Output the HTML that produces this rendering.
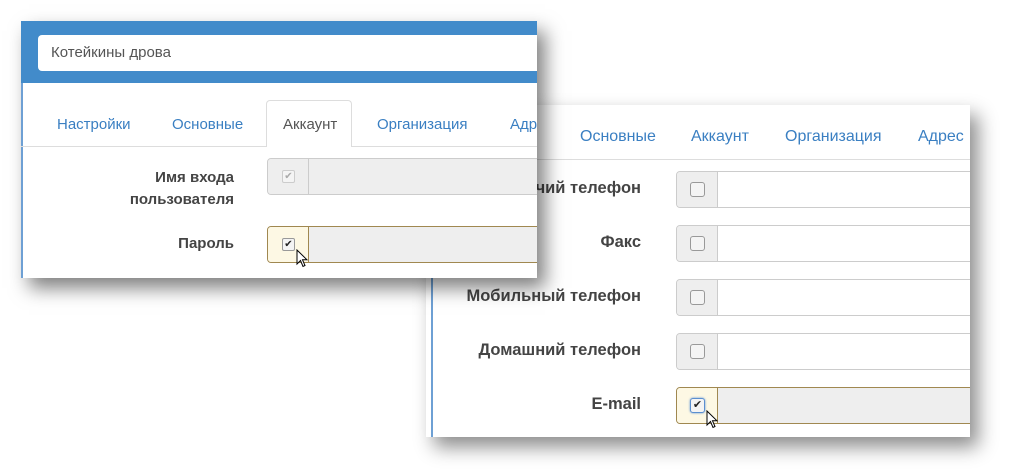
<!DOCTYPE html>
<html><head><meta charset="utf-8"><style>
body{margin:0;width:1013px;height:476px;background:#fff;position:relative;overflow:hidden;font-family:"Liberation Sans",Arial,sans-serif;}
.p{position:absolute;background:#fff;overflow:hidden;}
.t{position:absolute;font-size:15px;color:#3a7fc2;}
.l{position:absolute;font-size:15px;font-weight:bold;color:#444;text-align:right;}
.in{position:absolute;border:1px solid #ccc;border-radius:4px;background:#fff;box-sizing:border-box;}
.ad{position:absolute;left:0;top:0;bottom:0;width:40px;background:#eee;border-right:1px solid #ccc;border-radius:3px 0 0 3px;}
.cb{position:absolute;left:14px;top:11px;width:11px;height:11px;border:1px solid #999;border-radius:2px;background:#f4f4f4;font-size:10px;line-height:11px;text-align:center;color:#222;}
.p2 .cb{left:13px;top:10px;width:13px;height:13px;line-height:13px;font-size:11px;border-radius:3px}
.p2 .t{font-size:16px}
.p2 .l{font-size:16.5px}
.on{border-color:#a08850;}
.on .ad{background:#fdf8e4;border-right-color:#a08850;}
</style></head><body>

<div class="p p2" style="left:426px;top:105px;width:544px;height:332px;box-shadow:8px 10px 18px rgba(0,0,0,.45);">
 <div style="position:absolute;left:5px;top:0;bottom:0;width:2px;background:#6ea0d4"></div>
 <div style="position:absolute;left:0;right:0;top:54px;height:1px;background:#ddd"></div>
 <div class="t" style="left:154px;top:23px">Основные</div>
 <div class="t" style="left:265px;top:23px">Аккаунт</div>
 <div class="t" style="left:359px;top:23px">Организация</div>
 <div class="t" style="left:492px;top:23px">Адрес</div>
 <div class="l" style="right:329px;top:74px;width:300px">Рабочий телефон</div>
 <div class="l" style="right:329px;top:128px;width:300px">Факс</div>
 <div class="l" style="right:329px;top:182px;width:300px">Мобильный телефон</div>
 <div class="l" style="right:329px;top:236px;width:300px">Домашний телефон</div>
 <div class="l" style="right:329px;top:290px;width:300px">E-mail</div>
 <div class="in" style="left:250px;top:66px;width:320px;height:37px"><div class="ad"><div class="cb"></div></div></div>
 <div class="in" style="left:250px;top:120px;width:320px;height:37px"><div class="ad"><div class="cb"></div></div></div>
 <div class="in" style="left:250px;top:174px;width:320px;height:37px"><div class="ad"><div class="cb"></div></div></div>
 <div class="in" style="left:250px;top:228px;width:320px;height:37px"><div class="ad"><div class="cb"></div></div></div>
 <div class="in on" style="left:250px;top:282px;width:320px;height:37px;background:#eee"><div class="ad"><div class="cb" style="border-color:#5b8fd0;box-shadow:0 0 2px #5b8fd0">✔</div></div></div>
</div>

<div class="p" style="left:21px;top:21px;width:516px;height:257px;box-shadow:8px 10px 18px rgba(0,0,0,.5);">
 <div style="position:absolute;left:0;right:0;top:0;height:62px;background:#428bca"></div>
 <div style="position:absolute;left:0;top:62px;bottom:0;width:2px;background:#6ea0d4"></div>
 <div style="position:absolute;left:17px;top:14px;width:520px;height:36px;background:#fff;border-radius:4px;font-size:15px;color:#555;line-height:36px;padding-left:13px;box-sizing:border-box">Котейкины дрова</div>
 <div style="position:absolute;left:0;right:0;top:125px;height:1px;background:#ddd"></div>
 <div style="position:absolute;left:245px;top:79px;width:86px;height:47px;background:#fff;border:1px solid #ddd;border-bottom:none;border-radius:4px 4px 0 0;box-sizing:border-box"></div>
 <div class="t" style="left:36px;top:95px">Настройки</div>
 <div class="t" style="left:151px;top:95px">Основные</div>
 <div class="t" style="left:262px;top:95px;color:#555">Аккаунт</div>
 <div class="t" style="left:356px;top:95px">Организация</div>
 <div class="t" style="left:489px;top:95px">Адрес</div>
 <div class="l" style="right:303px;top:146px;width:200px;line-height:22px">Имя входа<br>пользователя</div>
 <div class="l" style="right:303px;top:214px;width:200px">Пароль</div>
 <div class="in" style="left:246px;top:137px;width:320px;height:37px;background:#eee"><div class="ad"><div class="cb" style="color:#aaa;border-color:#ccc">✔</div></div></div>
 <div class="in on" style="left:246px;top:205px;width:320px;height:37px;background:#eee"><div class="ad"><div class="cb">✔</div></div></div>
 <svg style="position:absolute;left:275px;top:228px" width="12" height="20" viewBox="0 0 12 20"><path d="M1 1 L1 15 L4.5 11.5 L7 17.5 L9 16.5 L6.5 10.8 L11 10.8 Z" fill="#fff" stroke="#000" stroke-width="1"/></svg>
</div>
<svg style="position:absolute;left:706px;top:410px" width="12" height="20" viewBox="0 0 12 20"><path d="M1 1 L1 15 L4.5 11.5 L7 17.5 L9 16.5 L6.5 10.8 L11 10.8 Z" fill="#fff" stroke="#000" stroke-width="1"/></svg>
</body></html>
